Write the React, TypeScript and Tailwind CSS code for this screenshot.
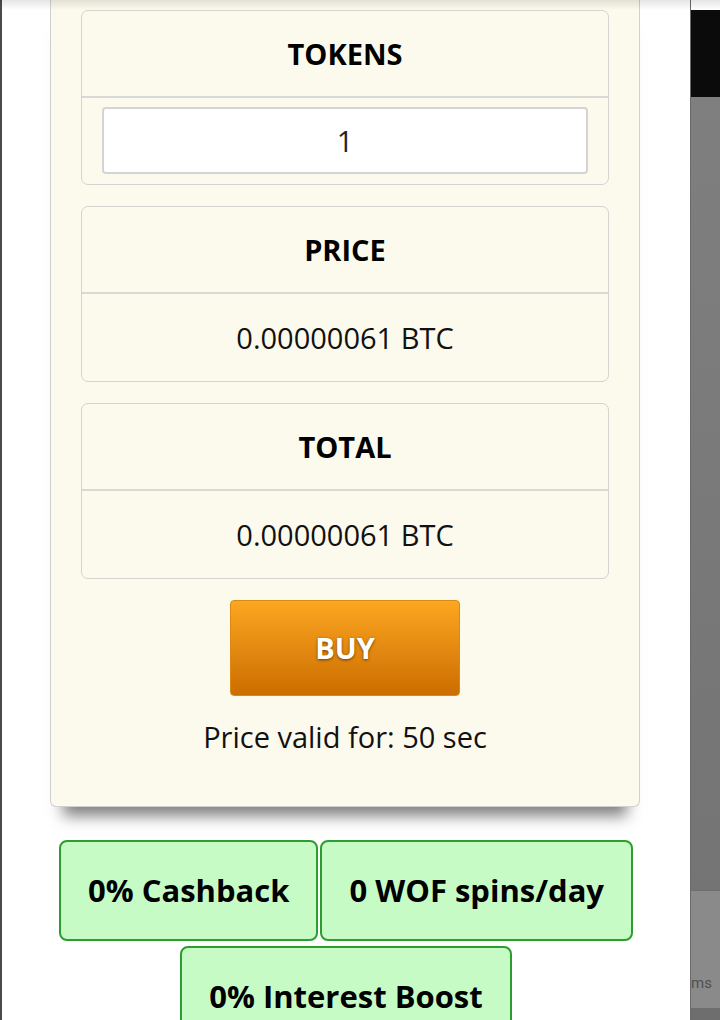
import React from "react";

const font = { fontFamily: '"Open Sans", "Noto Sans", sans-serif' };

function Section({ title, children }: { title: string; children: React.ReactNode }) {
  return (
    <div className="rounded-[7px] border border-[#d3d3cf] bg-[#fcfaec]">
      <div className="flex h-[87px] items-center justify-center border-b-2 border-[#d8d8d4] text-[29px] font-bold text-black">
        {title}
      </div>
      <div className="flex h-[87px] items-center justify-center">{children}</div>
    </div>
  );
}

export default function App() {
  return (
    <div className="relative flex h-[1020px] w-[720px] overflow-hidden bg-white" style={font}>
      <div className="w-[2px] shrink-0 bg-[#4a4a4a]" />
      <div className="flex w-[688px] shrink-0 flex-col bg-white">
        <div className="ml-[48px] w-[590px] rounded-b-[6px] border border-t-0 border-[#d0d0cc] bg-[#fcfaec] px-[30px] pt-[10px] pb-[47px] shadow-[0_22px_14px_-13px_rgba(0,0,0,0.5)]">
          <div className="rounded-[7px] border border-[#d3d3cf] bg-[#fcfaec]">
            <div className="flex h-[87px] items-center justify-center border-b-2 border-[#d8d8d4] text-[29px] font-bold text-black">
              TOKENS
            </div>
            <div className="px-[20px] pt-[9px] pb-[10px]">
              <div className="flex h-[67px] items-center justify-center rounded-[4px] border-2 border-[#d4d4d4] bg-white text-[29px] text-[#222]">
                1
              </div>
            </div>
          </div>
          <div className="mt-[21px]">
            <Section title="PRICE">
              <span className="text-[29px] text-[#111]">0.00000061 BTC</span>
            </Section>
          </div>
          <div className="mt-[21px]">
            <Section title="TOTAL">
              <span className="text-[29px] text-[#111]">0.00000061 BTC</span>
            </Section>
          </div>
          <div className="mt-[21px] flex justify-center">
            <button className="flex h-[96px] w-[230px] items-center justify-center rounded-[4px] border border-[#d98a16] bg-gradient-to-b from-[#fca720] to-[#cc6d00] text-[29px] font-bold text-white [text-shadow:0_1px_3px_rgba(0,0,0,0.55)]">
              BUY
            </button>
          </div>
          <div className="mt-[19px] text-center text-[29px] text-[#111]">Price valid for: 50 sec</div>
        </div>
        <div className="mt-[33px] ml-[54px] flex w-[580px] flex-wrap justify-center gap-x-[2px] gap-y-[5px]">
          {["0% Cashback", "0 WOF spins/day", "0% Interest Boost"].map((t) => (
            <div
              key={t}
              className="flex h-[101px] items-center justify-center rounded-[8px] border-2 border-[#2e9c2e] bg-[#c6fbc6] px-[27px] text-[31px] font-bold text-black"
            >
              {t}
            </div>
          ))}
        </div>
      </div>
      <div className="flex w-[30px] shrink-0 flex-col overflow-hidden border-l border-[#6a6a6a] bg-[#808080]">
        <div className="h-[10px] bg-white" />
        <div className="h-[87px] bg-[#0b0b0b]" />
        <div className="h-[793px] bg-gradient-to-b from-[#7f7f7f] to-[#747474]" />
        <div className="flex h-[118px] items-end border-t border-[#6e6e6e] bg-[#8a8a8a] pb-[14px] text-[15px] text-[#505050]" style={{ fontFamily: "Roboto, sans-serif" }}>
          <span className="whitespace-nowrap">ms</span>
        </div>
        <div className="flex-1 bg-[#6e6e6e]" />
      </div>
      <div className="pointer-events-none absolute left-0 top-0 h-[10px] w-[720px] bg-gradient-to-b from-[rgba(0,0,0,0.1)] to-transparent" />
    </div>
  );
}
